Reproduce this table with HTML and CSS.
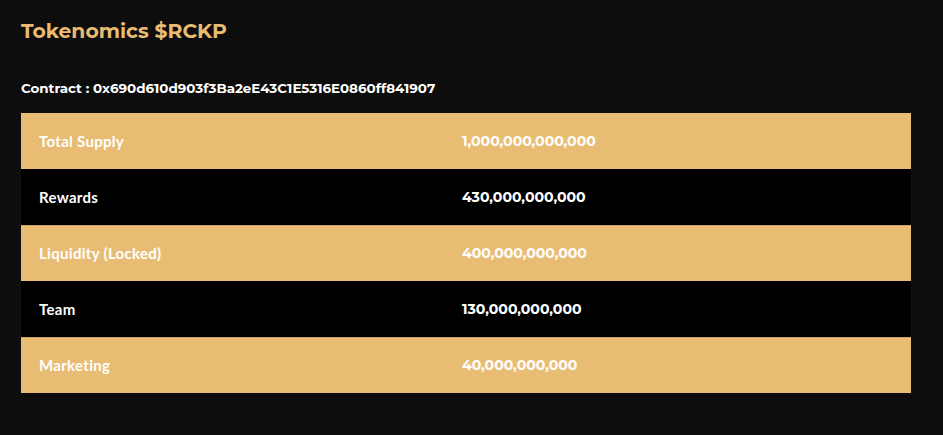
FILE: index.html
```html
<!DOCTYPE html>
<html lang="en">
<head>
    <meta charset="UTF-8">
    <meta name="viewport" content="width=device-width, initial-scale=1.0">
    <title>Tokenomics $RCKP</title>
    <link rel="stylesheet" href="styles.css">
</head>
<body>

    <section class="tokenomics">
        <h2 class="title">Tokenomics $RCKP</h2>

        <p class="contract">Contract : 0x690d610d903f3Ba2eE43C1E5316E0860ff841907</p>

        <!-- token distribution -->
        <table class="token-table">
            <tr class="gold">
                <td class="label">Total Supply</td>
                <td class="amount">1,000,000,000,000</td>
            </tr>
            <tr class="dark">
                <td class="label">Rewards</td>
                <td class="amount">430,000,000,000</td>
            </tr>
            <tr class="gold">
                <td class="label">Liquidity (Locked)</td>
                <td class="amount">400,000,000,000</td>
            </tr>
            <tr class="dark">
                <td class="label">Team</td>
                <td class="amount">130,000,000,000</td>
            </tr>
            <tr class="gold">
                <td class="label">Marketing</td>
                <td class="amount">40,000,000,000</td>
            </tr>
        </table>
    </section>

</body>
</html>
```

FILE: styles.css
```css
body {
    font-family: Montserrat, "Inter", "DejaVu Sans", sans-serif;
    margin: 0;
    background-color: #0d0d0d;
    color: #ffffff;
}

.tokenomics {
    padding: 18px 32px 0 21px;
}

.title {
    margin: 0;
    font-size: 20.3px;
    font-weight: 700;
    color: #e8bc71;
    line-height: 26px;
}

.contract {
    margin: 34px 0 0;
    font-size: 13.45px;
    font-weight: 700;
    line-height: 20px;
}

.token-table {
    width: 890px;
    margin-top: 15px;
    border-collapse: collapse;
    font-weight: 700;
}

.token-table td {
    height: 56px;
    padding: 0 18px;
    box-sizing: border-box;
}

.token-table .label {
    width: 423px;
    font-family: Lato, "Open Sans", sans-serif;
    font-size: 15px;
    letter-spacing: 0.3px;
}

.token-table .amount {
    font-size: 14.1px;
}

.gold {
    background-color: #e8bc73;
    border-top: 1px solid #c9a462;
}

.gold:first-child {
    border-top: none;
}

.dark {
    background-color: #000000;
}
```
